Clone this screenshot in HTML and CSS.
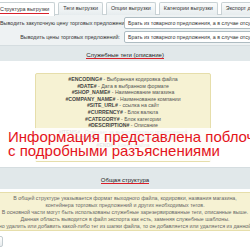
FILE: index.html
```html
<!DOCTYPE html>
<html lang="ru">
<head>
    <meta charset="UTF-8">
    <title>Настройки выгрузки</title>
    <link rel="stylesheet" href="styles.css">
</head>
<body>
    <div class="page">
        <!-- Tabs -->
        <div class="tabs">
            <div class="tab active"><span>Структура выгрузки</span></div>
            <div class="tab">Теги выгрузки</div>
            <div class="tab">Опции выгрузки</div>
            <div class="tab">Категории выгрузки</div>
            <div class="tab">Экспорт данных</div>
        </div>

        <!-- Options -->
        <div class="options">
            <div class="opt-row">
                <label class="opt-label">Выводить закупочную цену торговых предложений:</label>
                <div class="opt-input">Брать из товарного предложения, а в случае отсутствия из товара</div>
            </div>
            <div class="opt-row">
                <label class="opt-label">Выводить цены торговых предложений:</label>
                <div class="opt-input">Брать из товарного предложения, а в случае отсутствия из товара</div>
            </div>
        </div>

        <div class="section-title"><span>Служебные теги (описание)</span></div>

        <div class="tags-wrap">
            <div class="tags-box">
                <div><b>#ENCODING#</b> - Выбранная кодировка файла</div>
                <div><b>#DATE#</b> - Дата в выбранном формате</div>
                <div><b>#SHOP_NAME#</b> - Наименование магазина</div>
                <div><b>#COMPANY_NAME#</b> - Наименование компании</div>
                <div><b>#SITE_URL#</b> - ссылка на сайт</div>
                <div><b>#CURRENCY#</b> - Блок валюта</div>
                <div><b>#CATEGORY#</b> - Блок категории</div>
                <div><b>#DESCRIPTION#</b> - Описание</div>
                <div><b>#ITEMS#</b> - Отвечает за вывод торговых предложений</div>
                <div><b>#OFFERS#</b> - Блок торговых предложений</div>
                <div><b>#END#</b> - Конец файла</div>
            </div>
        </div>

        <div class="section-title big"><span>Общая структура</span></div>

        <div class="note-box">
            <div>В общей структуре указывается формат выходного файла, кодировки, названия магазина,</div>
            <div>контейнера торговых предложений и других необходимых тегов.</div>
            <div>В основной части могут быть использованы служебные зарезервированные теги, описанные выше.</div>
            <div>Данная область выводится в файл экспорта как есть, заменяя служебные шаблоны.</div>
            <div>Если нужно удалить или добавить какой-либо тег из шапки файла, то он добавляется или удаляется из данной области.</div>
        </div>

        <div class="footer">
            <button class="btn"></button>
        </div>

        <!-- Caption over the screenshot -->
        <div class="caption">Информация представлена поблочно<br>с подробными разъяснениями</div>
    </div>
</body>
</html>
```

FILE: styles.css
```css
* {
    margin: 0;
    padding: 0;
    box-sizing: border-box;
}

body {
    background-color: #fff;
    font-family: "Liberation Sans", Arial, sans-serif;
    color: #333;
    overflow: hidden;
}

.page {
    position: relative;
    width: 250px;
    height: 250px;
    overflow: hidden;
}

/* tabs */
.tabs {
    display: flex;
    gap: 3px;
    height: 15px;
    padding-top: 2px;
    margin-left: -5px;
    border-bottom: 1px solid #c9d2d5;
    background-color: #fff;
}

.tab {
    flex: none;
    height: 13px;
    padding: 0 4px;
    font-size: 5.4px;
    line-height: 11px;
    color: #333;
    white-space: nowrap;
    border: 1px solid #c9d2d5;
    border-bottom: none;
    border-radius: 2px 2px 0 0;
    background: linear-gradient(#fbfcfc, #e6ecee);
}

.tab.active {
    background: #fff;
    height: 14px;
    padding-right: 5px;
}

.tab.active span {
    display: inline-block;
    line-height: 8px;
    padding-top: 2px;
    border-bottom: 1.5px solid #d8202a;
}

/* options */
.options {
    display: flex;
    flex-direction: column;
    gap: 2px;
    padding: 2px 0 2px;
    background-color: #eef2f3;
}

.opt-row {
    display: flex;
    align-items: center;
    gap: 4px;
}

.opt-label {
    width: 120px;
    flex: none;
    text-align: right;
    font-size: 5.4px;
    color: #333;
    white-space: nowrap;
}

.opt-input {
    flex: none;
    width: 200px;
    height: 12px;
    padding: 0 3px;
    font-size: 5.3px;
    line-height: 10px;
    white-space: nowrap;
    overflow: hidden;
    background-color: #fff;
    border: 1px solid #aebcc2;
    border-radius: 2px;
}

/* section titles */
.section-title {
    display: flex;
    justify-content: center;
    align-items: flex-start;
    height: 16px;
    padding-top: 6px;
    font-size: 6px;
    background-color: #e1e8ea;
    border-top: 1px solid #d5dde0;
}

.section-title span {
    display: block;
    font-size: 6px;
    line-height: 6px;
    color: #222;
    border-bottom: 1.5px solid #d8202a;
}

.section-title.big {
    height: 22px;
    margin-top: 5px;
    padding-top: 9px;
}

/* yellow boxes */
.tags-wrap {
    padding: 12px 39px 0 35px;
}

.tags-box {
    height: 89px;
    padding-top: 2px;
    display: flex;
    flex-direction: column;
    align-items: center;
    font-size: 5.2px;
    line-height: 6.6px;
    color: #555;
    white-space: nowrap;
    background-color: #f6f2d3;
    border: 1px solid #e6deab;
    border-radius: 2px;
}

.tags-box b {
    color: #444;
}

.note-box {
    margin-top: 3px;
    height: 39px;
    padding-top: 2px;
    display: flex;
    flex-direction: column;
    align-items: center;
    font-size: 5.3px;
    line-height: 7px;
    color: #666;
    white-space: nowrap;
    background-color: #f6f2d3;
    border-top: 1px solid #e6deab;
    border-bottom: 1px solid #e6deab;
}

.footer {
    padding: 5px 0 0 0;
}

.btn {
    display: block;
    width: 10px;
    height: 11px;
    margin-left: -7px;
    background: linear-gradient(#fff, #e8ecee);
    border: 1px solid #c3ccd0;
    border-radius: 2px;
}

/* caption laid over the screenshot */
.caption {
    position: absolute;
    left: 0;
    top: 128px;
    width: 214px;
    padding: 2px 0 3px 8px;
    font-size: 15px;
    line-height: 14px;
    color: #e4141b;
    white-space: nowrap;
    background-color: rgba(255, 255, 255, 0.86);
}
```
